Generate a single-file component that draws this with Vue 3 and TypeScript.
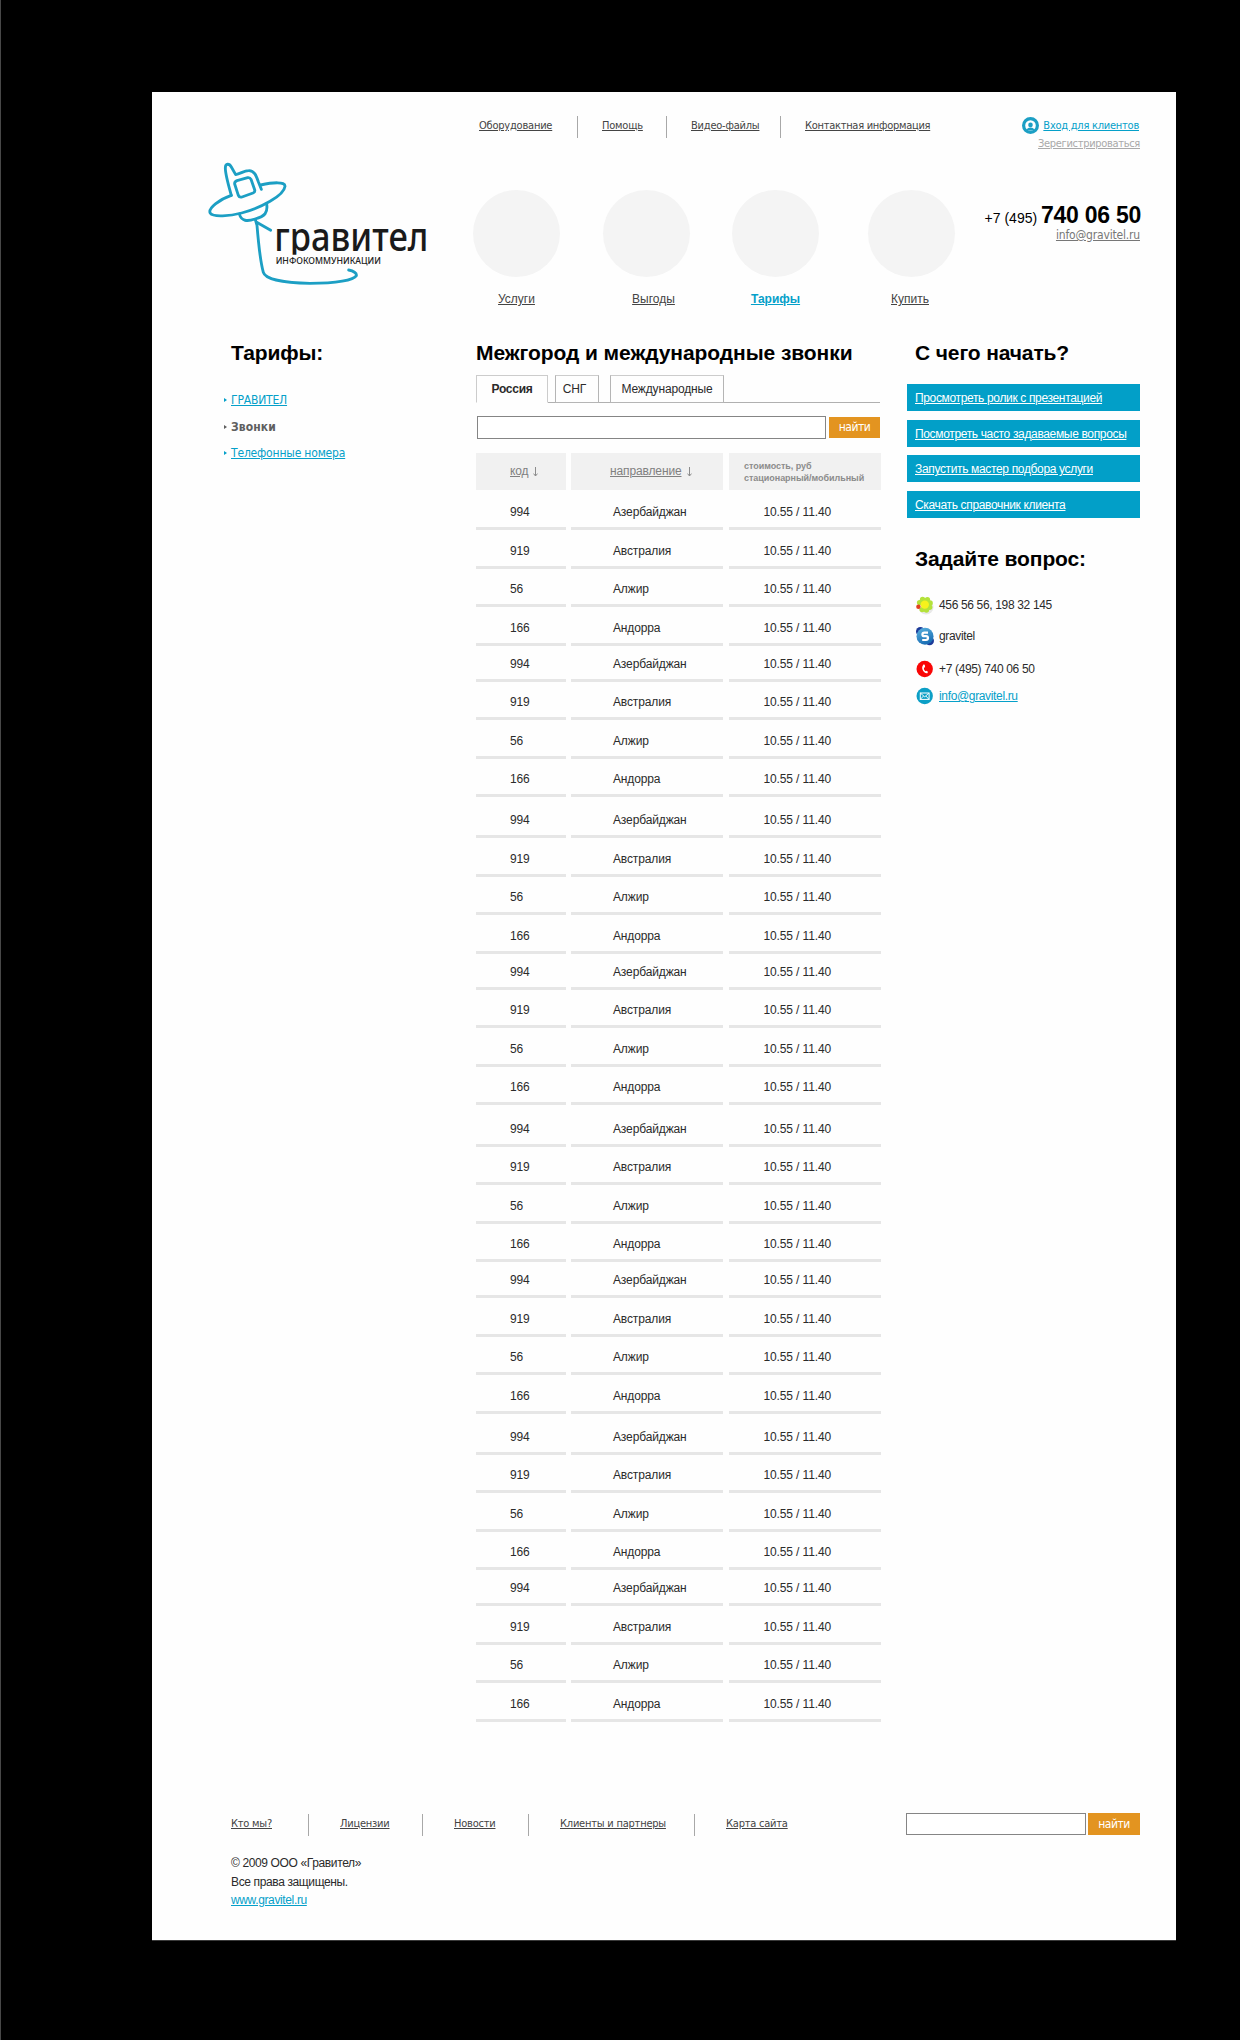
<script setup lang="ts">
interface Tariff {
  code: string
  country: string
  price: string
}

const topLinks: string[] = ['Оборудование', 'Помощь', 'Видео-файлы', 'Контактная информация']
const sections = [
  { label: 'Услуги', active: false },
  { label: 'Выгоды', active: false },
  { label: 'Тарифы', active: true },
  { label: 'Купить', active: false },
]
const tabs: string[] = ['Россия', 'СНГ', 'Международные']
const startLinks: string[] = [
  'Просмотреть ролик с презентацией',
  'Посмотреть часто задаваемые вопросы',
  'Запустить мастер подбора услуги',
  'Скачать справочник клиента',
]
const footerLinks: string[] = ['Кто мы?', 'Лицензии', 'Новости', 'Клиенты и партнеры', 'Карта сайта']

const tariffs: Tariff[] = [
  { code: '994', country: 'Азербайджан', price: '10.55 / 11.40' },
  { code: '919', country: 'Австралия', price: '10.55 / 11.40' },
  { code: '56', country: 'Алжир', price: '10.55 / 11.40' },
  { code: '166', country: 'Андорра', price: '10.55 / 11.40' },
]
const groups: Tariff[][] = Array.from({ length: 8 }, () => tariffs)
</script>

<template>
  <div class="canvas">
    <div class="page">
      <header class="header">
        <svg class="logo" viewBox="195 240 690 390" width="230" height="130">
          <defs>
            <clipPath id="name-clip">
              <rect x="395" y="400" width="490" height="124" />
            </clipPath>
          </defs>
          <g fill="none" stroke="#1c9fc4" stroke-width="8.5" stroke-linecap="round" stroke-linejoin="round">
            <path d="M274 346 C266 318 256 284 256 264 C256 249 268 250 274 261 L287 284 C302 281 312 272 326 272 C343 271 349 288 355 305 L364 328" />
            <path d="M274 346 C240 357 202 386 211 400 C219 412 270 408 305 399 C362 384 432 347 435 319 C436 304 398 307 362 315" />
            <path d="M291 302 L323 293 Q330 292 333 298 L344 329 Q346 336 339 339 L306 351 Q298 353 295 346 L284 312 Q283 305 291 302 Z" />
            <path d="M298 402 C304 424 322 425 345 417 C375 409 384 398 380 372" />
            <path d="M346 419 L351 436 C355 485 361 545 370 577 C376 597 430 609 510 610 C590 610 641 600 649 587 C651 579 640 573 626 570" />
            <path d="M350 427 L392 451" />
          </g>
          <g clip-path="url(#name-clip)">
            <text class="logo-name" x="403" y="512" textLength="462" lengthAdjust="spacingAndGlyphs">гравител</text>
          </g>
          <text class="logo-sub" x="407" y="553" textLength="316" lengthAdjust="spacingAndGlyphs">ИНФОКОММУНИКАЦИИ</text>
        </svg>

        <div class="header-mid">
          <nav class="top-nav">
            <a v-for="link in topLinks" :key="link" href="#">{{ link }}</a>
          </nav>
          <nav class="sections">
            <a v-for="s in sections" :key="s.label" href="#" :class="{ active: s.active }">
              <i class="disc"></i>
              <span>{{ s.label }}</span>
            </a>
          </nav>
        </div>

        <div class="header-right">
          <div class="login">
            <svg viewBox="0 0 17 17" width="17" height="17">
              <circle cx="8.5" cy="8.5" r="6.9" fill="#fff" stroke="#1c9fc4" stroke-width="3.2" />
              <circle cx="8.5" cy="7.9" r="2.3" fill="#1c9fc4" />
              <path d="M4.6 13.5 Q5 10.6 8.5 10.6 T12.4 13.5 Z" fill="#1c9fc4" />
            </svg>
            <a href="#">Вход для клиентов</a>
          </div>
          <a class="register" href="#">Зерегистрироваться</a>
          <div class="phone"><span>+7 (495)</span> <b>740 06 50</b></div>
          <a class="mail" href="#">info@gravitel.ru</a>
        </div>
      </header>

      <main class="body">
        <aside class="side">
          <h2>Тарифы:</h2>
          <ul>
            <li><a href="#">ГРАВИТЕЛ</a></li>
            <li class="current"><b>Звонки</b></li>
            <li><a href="#">Телефонные номера</a></li>
          </ul>
        </aside>

        <section class="content">
          <h2>Межгород и международные звонки</h2>
          <div class="tabs">
            <span v-for="(tab, i) in tabs" :key="tab" class="tab" :class="{ current: i === 0 }">{{ tab }}</span>
          </div>
          <form class="search">
            <input type="text" />
            <button type="button">найти</button>
          </form>

          <div class="row head">
            <div><u>код</u><svg class="arrow" viewBox="0 0 5 10" width="5" height="10"><path d="M2.5 0 V9 M0.5 6.6 L2.5 9 L4.5 6.6" /></svg></div>
            <div><u>направление</u><svg class="arrow" viewBox="0 0 5 10" width="5" height="10"><path d="M2.5 0 V9 M0.5 6.6 L2.5 9 L4.5 6.6" /></svg></div>
            <div class="cost">стоимость, руб<br />стационарный/мобильный</div>
          </div>
          <div
            v-for="(group, g) in groups"
            :key="g"
            class="group"
            :class="{ tight: g % 2 === 1, loose: g > 0 && g % 2 === 0 }"
          >
            <div v-for="t in group" :key="t.code" class="row">
              <div>{{ t.code }}</div>
              <div>{{ t.country }}</div>
              <div>{{ t.price }}</div>
            </div>
          </div>
        </section>

        <aside class="help">
          <h2>С чего начать?</h2>
          <div class="start">
            <a v-for="link in startLinks" :key="link" href="#">{{ link }}</a>
          </div>
          <h2>Задайте вопрос:</h2>
          <ul class="contacts">
            <li>
              <svg viewBox="0 0 20 20" width="20" height="20">
                <circle cx="11" cy="12" r="7.6" fill="#e8e8e8" />
                <g fill="#b4e23a">
                  <circle cx="7.6" cy="4.5" r="2.7" /><circle cx="12.4" cy="4.6" r="2.7" /><circle cx="15.1" cy="8" r="2.7" />
                  <circle cx="14.7" cy="12.2" r="2.7" /><circle cx="11.4" cy="15" r="2.7" /><circle cx="7.2" cy="14.6" r="2.7" />
                  <circle cx="4.6" cy="7.6" r="2.7" />
                </g>
                <circle cx="9.8" cy="9.6" r="4.2" fill="#f7f21c" />
                <circle cx="3.4" cy="11.8" r="2.2" fill="#e0401e" />
              </svg>
              <span>456 56 56, 198 32 145</span>
            </li>
            <li>
              <svg viewBox="0 0 20 20" width="20" height="20">
                <defs>
                  <linearGradient id="sk" x1="0" y1="0" x2="0.4" y2="1">
                    <stop offset="0" stop-color="#5db4e0" />
                    <stop offset="1" stop-color="#1a6fb5" />
                  </linearGradient>
                </defs>
                <circle cx="5.4" cy="5.4" r="4.4" fill="#1c3a98" />
                <circle cx="14.6" cy="14.8" r="4.4" fill="#1c3a98" />
                <circle cx="10" cy="10.2" r="8.5" fill="url(#sk)" />
                <path d="M13 6.6 H9.4 Q7.4 6.6 7.4 8.4 Q7.4 10.2 9.4 10.2 H11 Q13 10.2 13 12.1 Q13 14 11 14 H7.2" fill="none" stroke="#fff" stroke-width="2.2" />
              </svg>
              <span>gravitel</span>
            </li>
            <li>
              <svg viewBox="0 0 20 20" width="20" height="20">
                <circle cx="9.7" cy="10" r="8.2" fill="#f90606" />
                <path d="M8.3 5.4 Q5.6 9.6 9.6 13.5 Q10.8 14.6 12.4 14.2 L13 12.8 L11.3 11.7 L10.3 12.3 Q8.7 10.7 8.9 8.7 L10.1 8.2 L9.8 5.7 Z" fill="#fff" />
              </svg>
              <span>+7 (495) 740 06 50</span>
            </li>
            <li>
              <svg viewBox="0 0 20 20" width="20" height="20">
                <circle cx="9.7" cy="10" r="8.2" fill="#0c9fc6" />
                <rect x="5.3" y="7" width="8.8" height="6.4" fill="none" stroke="#fff" />
                <path d="M5.5 7.2 L9.7 10.8 L13.9 7.2 M5.5 13.2 L8.5 10 M13.9 13.2 L10.9 10" fill="none" stroke="#fff" stroke-width=".9" />
              </svg>
              <a href="#">info@gravitel.ru</a>
            </li>
          </ul>
        </aside>
      </main>

      <footer class="footer">
        <div class="footer-bar">
          <nav class="footer-nav">
            <a v-for="link in footerLinks" :key="link" href="#">{{ link }}</a>
          </nav>
          <form class="search small">
            <input type="text" />
            <button type="button">найти</button>
          </form>
        </div>
        <div class="copy">
          © 2009 ООО «Гравител»<br />
          Все права защищены.<br />
          <a href="#">www.gravitel.ru</a>
        </div>
      </footer>
    </div>
  </div>
</template>

<style>
body {
  background: #000;
}
</style>

<style scoped>
.canvas {
  box-sizing: border-box;
  width: 1240px;
  height: 2040px;
  padding: 92px 0 0 151px;
  border-left: 1px solid #484848;
  background: #000;
  font: 12px/14px "Liberation Sans", Arial, sans-serif;
  color: #2b2b2b;
}
.page {
  box-sizing: border-box;
  display: flex;
  flex-direction: column;
  width: 1024px;
  height: 1849px;
  background: #fefefe;
  border-bottom: 1px solid #3a3a3a;
}
a {
  color: inherit;
  text-underline-offset: 1px;
}
h2 {
  margin: 0;
  font-size: 21px;
  line-height: 24px;
  letter-spacing: -0.12px;
  color: #000;
  white-space: nowrap;
}
ul {
  list-style: none;
  margin: 0;
  padding: 0;
}

/* header */
.header {
  display: flex;
  flex: none;
  height: 249px;
}
.logo {
  flex: none;
  margin: 68px 0 0 53px;
}
.logo-name {
  font: 500 118px "Noto Sans", sans-serif;
  fill: #1a1a1a;
}
.logo-sub {
  font: 500 28px "Noto Sans", sans-serif;
  fill: #222;
}
.header-mid {
  flex: none;
  width: 490px;
  margin-left: 38px;
  padding-top: 24px;
}
.top-nav,
.footer-nav {
  display: flex;
  font: 11px/22px "DejaVu Sans Condensed", "Noto Sans", sans-serif;
  letter-spacing: -0.22px;
  color: #444;
  white-space: nowrap;
}
.top-nav {
  padding-left: 6px;
}
.top-nav a,
.footer-nav a {
  box-sizing: border-box;
  height: 22px;
  line-height: 20px;
  border-left: 1px solid #a8a8a8;
}
.top-nav a:first-child,
.footer-nav a:first-child {
  border-left: 0;
}
.top-nav a:nth-child(1) { width: 98px; }
.top-nav a:nth-child(2) { width: 89px; padding-left: 24px; }
.top-nav a:nth-child(3) { width: 114px; padding-left: 24px; }
.top-nav a:nth-child(4) { padding-left: 24px; letter-spacing: -0.28px; }
.sections {
  display: flex;
  margin-top: 52px;
  color: #444;
}
.sections a {
  display: flex;
  flex-direction: column;
  align-items: center;
  width: 87px;
  text-decoration: none;
}
.sections a + a { margin-left: 43px; }
.sections a:nth-child(3) { margin-left: 42px; }
.sections a:nth-child(4) { margin-left: 49px; }
.sections a:nth-child(2) span { padding-left: 14px; }
.sections a:nth-child(4) span { padding-right: 3px; }
.sections span {
  margin-top: 15px;
  text-decoration: underline;
  text-underline-offset: 1px;
}
.sections .active {
  color: #05a0c9;
  font-weight: 700;
}
.disc {
  width: 87px;
  height: 87px;
  border-radius: 50%;
  background: #f4f4f4;
}
.header-right {
  display: flex;
  flex-direction: column;
  align-items: flex-end;
  width: 177px;
  padding-top: 25px;
  white-space: nowrap;
}
.login {
  display: flex;
  gap: 4px;
  margin-right: 1px;
  font: 11px/16px "DejaVu Sans Condensed", "Noto Sans", sans-serif;
  letter-spacing: -0.25px;
  color: #05a0c9;
}
.login a { margin-top: 1px; }
.register {
  margin-top: 1px;
  font: 11px/17px "DejaVu Sans Condensed", "Noto Sans", sans-serif;
  letter-spacing: -0.31px;
  color: #a9a9a9;
}
.phone {
  margin: 50px -1px 0 0;
  font-size: 14px;
  line-height: 26px;
  color: #000;
}
.phone b {
  font-size: 23px;
  letter-spacing: -0.26px;
}
.mail {
  margin-top: -3px;
  font: 12px/14px "DejaVu Sans Condensed", "Noto Sans", sans-serif;
  letter-spacing: -0.18px;
  color: #777;
}

/* body */
.body {
  display: flex;
  flex: none;
  height: 1472px;
}
.side {
  width: 253px;
  padding-left: 71px;
}
.side h2 {
  margin-left: 8px;
}
.side ul {
  margin-top: 22px;
  font: 12px/26.6px "DejaVu Sans Condensed", "Noto Sans", sans-serif;
  letter-spacing: -0.18px;
  color: #05a0c9;
}
.side li {
  display: flex;
  align-items: center;
}
.side li::before {
  content: "";
  margin: 0 4px 0 1px;
  border: solid transparent;
  border-width: 2px 0 2px 3px;
  border-left-color: currentColor;
}
.side .current {
  color: #5f5f5f;
  letter-spacing: 0.1px;
}
.content {
  width: 405px;
}
.content h2 {
  letter-spacing: -0.07px;
}
.tabs {
  display: flex;
  height: 28px;
  margin-top: 10px;
  background: linear-gradient(#b0b0b0, #b0b0b0) 72px 100% / 332px 1px no-repeat;
}
.tab {
  box-sizing: border-box;
  border: 1px solid #b5b5b5;
  border-top-color: #ccc;
  line-height: 26px;
  letter-spacing: -0.14px;
  text-align: center;
}
.tab:nth-child(1) { width: 72px; }
.tab:nth-child(2) { width: 44px; margin-left: 7px; padding-right: 5px; }
.tab:nth-child(3) { width: 114px; margin-left: 11px; }
.tab.current {
  border-color: #ccc;
  border-bottom-color: transparent;
  font-weight: 700;
  letter-spacing: -0.25px;
}
.search {
  display: flex;
  gap: 3px;
  margin: 13px 0 0 1px;
}
.search input {
  box-sizing: border-box;
  width: 349px;
  height: 23px;
  padding: 0 4px;
  border: 1px solid #858585;
  background: #fff;
}
.search button {
  width: 51px;
  height: 21px;
  margin-top: 1px;
  padding: 0;
  border: 0;
  background: #e39420;
  color: #fff;
  font: 12px/21px "DejaVu Sans Condensed", "Noto Sans", sans-serif;
  letter-spacing: -0.45px;
}
.row {
  display: grid;
  grid-template-columns: 90px 153px 152px;
  column-gap: 5px;
}
.row > div {
  box-sizing: border-box;
  height: 38.5px;
  padding-top: 13.5px;
  border-bottom: 3px solid #e6e6e6;
  letter-spacing: -0.13px;
  white-space: nowrap;
}
.row > div:nth-child(1) { padding-left: 34px; }
.row > div:nth-child(2) { width: 152px; padding-left: 42px; }
.row > div:nth-child(3) { padding-left: 34.5px; }
.row.head {
  margin: 14px 0 1.5px;
}
.row.head > div {
  height: 37px;
  padding-top: 11px;
  border: 0;
  background: #f1f1f1;
  color: #808080;
}
.row.head > div:nth-child(2) { padding-left: 39px; }
.row.head > .cost {
  padding: 7px 0 0 15px;
  font-size: 9px;
  font-weight: 700;
  line-height: 12px;
  letter-spacing: -0.04px;
  color: #8c8c8c;
}
.row u { text-underline-offset: 1px; }
.arrow {
  margin-left: 5px;
  vertical-align: -2px;
  fill: none;
  stroke: #8c8c8c;
  stroke-width: 1;
}
.group.tight { margin-top: -2.5px; }
.group.loose { margin-top: 2.8px; }

/* right column */
.help {
  width: 233px;
  margin-left: 26px;
}
.help h2 { margin-left: 8px; }
.start {
  display: flex;
  flex-direction: column;
  gap: 8.7px;
  margin: 19px 0 29px;
}
.start a {
  height: 27px;
  padding-left: 8px;
  background: #029fc8;
  color: #fff;
  line-height: 28px;
  letter-spacing: -0.345px;
  white-space: nowrap;
}
.contacts {
  margin-top: 18px;
  letter-spacing: -0.345px;
}
.contacts li {
  display: flex;
  align-items: center;
  height: 32px;
  padding-left: 8px;
}
.contacts li:nth-child(2) { margin: -1px 0 1px; }
.contacts li:nth-child(4) { margin-top: -5px; }
.contacts svg {
  margin-right: 4px;
}
.contacts a { color: #05a0c9; }

/* footer */
.footer-bar {
  display: flex;
}
.footer-nav {
  width: 675px;
  padding: 1px 0 0 79px;
}
.footer-nav a:nth-child(1) { width: 77px; }
.footer-nav a:nth-child(2) { width: 114px; padding-left: 31px; }
.footer-nav a:nth-child(3) { width: 106px; padding-left: 31px; }
.footer-nav a:nth-child(4) { width: 166px; padding-left: 31px; }
.footer-nav a:nth-child(5) { padding-left: 31px; }
.search.small {
  gap: 2px;
  margin: 0;
}
.search.small input {
  width: 180px;
  height: 22px;
}
.search.small button {
  width: 52px;
  height: 22px;
  margin-top: 0;
  padding-top: 1px;
}
.copy {
  margin: 18px 0 0 79px;
  line-height: 18.5px;
  letter-spacing: -0.37px;
}
.copy a { color: #05a0c9; }
</style>
